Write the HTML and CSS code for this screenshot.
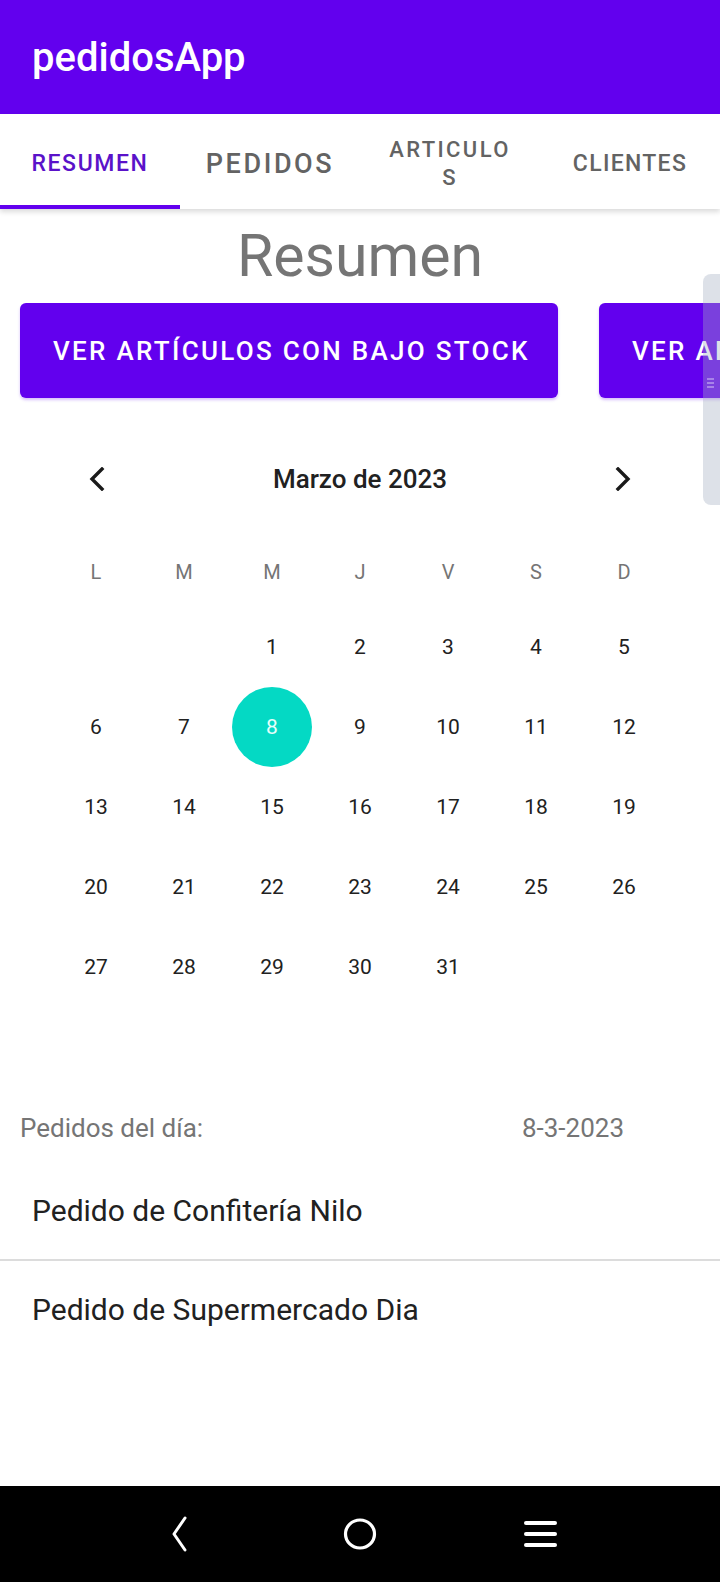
FILE: index.html
```html
<!DOCTYPE html>
<html lang="es">
<head>
<meta charset="utf-8">
<title>pedidosApp</title>
<link rel="stylesheet" href="styles.css">
</head>
<body>
<header class="appbar"><h1 class="app-title">pedidosApp</h1></header>
<nav class="tabs">
  <div class="tab active"><span class="tab-label">RESUMEN</span></div>
  <div class="tab"><span class="tab-label big">PEDIDOS</span></div>
  <div class="tab"><span class="tab-label small">ARTICULO<br>S</span></div>
  <div class="tab"><span class="tab-label">CLIENTES</span></div>
</nav>
<main class="content">
  <h2 class="page-title">Resumen</h2>
  <div class="button-row">
    <button class="action-btn">VER ARTÍCULOS CON BAJO STOCK</button>
    <button class="action-btn">VER ARTÍCULOS SIN STOCK</button>
  </div>
  <div class="scroll-handle"><span class="grip"></span></div>

  <section class="calendar">
    <div class="cal-header">
      <svg class="chev" viewBox="0 0 16 24" width="16" height="24"><path d="M13 2 L3 12 L13 22" fill="none" stroke="#1a1a1a" stroke-width="3.4" stroke-linecap="square"/></svg>
      <span class="cal-month">Marzo de 2023</span>
      <svg class="chev" viewBox="0 0 16 24" width="16" height="24"><path d="M3 2 L13 12 L3 22" fill="none" stroke="#1a1a1a" stroke-width="3.4" stroke-linecap="square"/></svg>
    </div>
    <div class="cal-dow">
      <span>L</span><span>M</span><span>M</span><span>J</span><span>V</span><span>S</span><span>D</span>
    </div>
    <div class="cal-grid">
      <span></span><span></span><span>1</span><span>2</span><span>3</span><span>4</span><span>5</span>
      <span>6</span><span>7</span><span class="sel"><i>8</i></span><span>9</span><span>10</span><span>11</span><span>12</span>
      <span>13</span><span>14</span><span>15</span><span>16</span><span>17</span><span>18</span><span>19</span>
      <span>20</span><span>21</span><span>22</span><span>23</span><span>24</span><span>25</span><span>26</span>
      <span>27</span><span>28</span><span>29</span><span>30</span><span>31</span><span></span><span></span>
    </div>
  </section>

  <div class="day-row">
    <span>Pedidos del día:</span>
    <span>8-3-2023</span>
  </div>
  <ul class="orders">
    <li>Pedido de Confitería Nilo</li>
    <li>Pedido de Supermercado Dia</li>
  </ul>
</main>
<footer class="sysnav">
  <svg viewBox="0 0 24 36" width="24" height="36"><path d="M17 2 L6 18 L17 34" fill="none" stroke="#fff" stroke-width="3" stroke-linecap="round" stroke-linejoin="round"/></svg>
  <svg viewBox="0 0 36 36" width="36" height="36"><ellipse cx="18" cy="18" rx="14.5" ry="14" fill="none" stroke="#fff" stroke-width="3.2"/></svg>
  <svg viewBox="0 0 36 36" width="36" height="36"><g stroke="#fff" stroke-width="4" stroke-linecap="round"><line x1="4" y1="7" x2="33" y2="7"/><line x1="4" y1="18" x2="33" y2="18"/><line x1="4" y1="29" x2="33" y2="29"/></g></svg>
</footer>
</body>
</html>
```
FILE: styles.css
```css
* { box-sizing: border-box; }
html, body { margin: 0; padding: 0; }
body {
  width: 720px;
  height: 1582px;
  display: flex;
  flex-direction: column;
  font-family: Roboto, "Noto Sans", sans-serif;
  background: #fff;
  color: #212121;
  overflow: hidden;
}
.appbar {
  height: 114px;
  background: #6200ee;
  display: flex;
  align-items: center;
  padding-left: 32px;
  flex: none;
}
.app-title {
  margin: 0;
  color: #fff;
  font-size: 40px;
  font-weight: 500;
  line-height: 1;
  padding-top: 2px;
}
.tabs {
  height: 95px;
  flex: none;
  display: grid;
  grid-template-columns: repeat(4, 180px);
  box-shadow: 0 3px 5px rgba(0,0,0,0.14);
  position: relative;
  z-index: 2;
  background: #fff;
}
.tab {
  display: flex;
  align-items: center;
  justify-content: center;
  border-bottom: 4px solid transparent;
  padding-top: 8px;
}
.tab.active { border-bottom-color: #6200ee; }
.tab-label {
  font-size: 23px;
  font-weight: 500;
  letter-spacing: 1.6px;
  color: #636363;
  text-align: center;
  line-height: 26px;
}
.tab.active .tab-label { color: #5a12c9; }
.tab-label.big { font-size: 27px; letter-spacing: 2.6px; }
.tab-label.small { font-size: 22px; letter-spacing: 2.4px; line-height: 28px; }
.tab:nth-child(4) .tab-label { letter-spacing: 1.3px; }

.content {
  flex: 1;
  position: relative;
}
.page-title {
  margin: 13px 0 0;
  text-align: center;
  font-size: 59px;
  font-weight: 400;
  line-height: 68px;
  color: #757575;
}
.button-row {
  display: flex;
  gap: 41px;
  padding: 0 20px 6px;
  margin-top: 13px;
  overflow: hidden;
}
.action-btn {
  flex: none;
  width: 538px;
  height: 95px;
  border: 0;
  border-radius: 6px;
  background: #6200ee;
  color: #fff;
  font-family: Roboto, sans-serif;
  font-size: 26px;
  font-weight: 500;
  letter-spacing: 2.3px;
  box-shadow: 0 2px 3px rgba(98,0,238,0.25);
  padding: 0;
  text-align: left;
  padding-left: 33px;
}
.scroll-handle {
  position: absolute;
  right: 0;
  top: 65px;
  width: 17px;
  height: 231px;
  border-radius: 8px 0 0 8px;
  background: rgba(163,174,193,0.37);
}
.grip {
  position: absolute;
  left: 4px;
  top: 104px;
  width: 7px;
  height: 10px;
  background: repeating-linear-gradient(to bottom, rgba(255,255,255,0.35) 0 2px, transparent 2px 4px);
}
.calendar {
  width: 616px;
  margin: 35px auto 0;
}
.cal-header {
  height: 80px;
  display: flex;
  align-items: center;
  justify-content: space-between;
  padding: 0 37px;
}
.cal-month {
  font-size: 26px;
  font-weight: 500;
  color: #212121;
}
.cal-dow {
  margin-top: 18px;
  height: 70px;
  display: grid;
  grid-template-columns: repeat(7, 88px);
  align-items: center;
  justify-items: center;
  color: #757575;
  font-size: 20px;
}
.cal-grid {
  display: grid;
  grid-template-columns: repeat(7, 88px);
  grid-auto-rows: 80px;
  align-items: center;
  justify-items: center;
  font-size: 21px;
  color: #212121;
}
.cal-grid .sel i {
  font-style: normal;
  width: 80px;
  height: 80px;
  border-radius: 50%;
  background: #04d9c4;
  color: #e6fffb;
  display: flex;
  align-items: center;
  justify-content: center;
}
.day-row {
  margin-top: 104px;
  display: flex;
  justify-content: space-between;
  padding: 0 96px 0 20px;
  font-size: 26px;
  color: #757575;
  line-height: 34px;
}
.orders {
  list-style: none;
  margin: 16px 0 0;
  padding: 0;
}
.orders li {
  height: 98px;
  display: flex;
  align-items: center;
  padding-left: 32px;
  font-size: 30px;
  color: #212121;
}
.orders li + li { border-top: 2px solid #dcdcdc; }
.sysnav {
  flex: none;
  height: 96px;
  background: #000;
  display: grid;
  grid-template-columns: repeat(3, 180px);
  justify-content: center;
  align-items: center;
  justify-items: center;
}
```
